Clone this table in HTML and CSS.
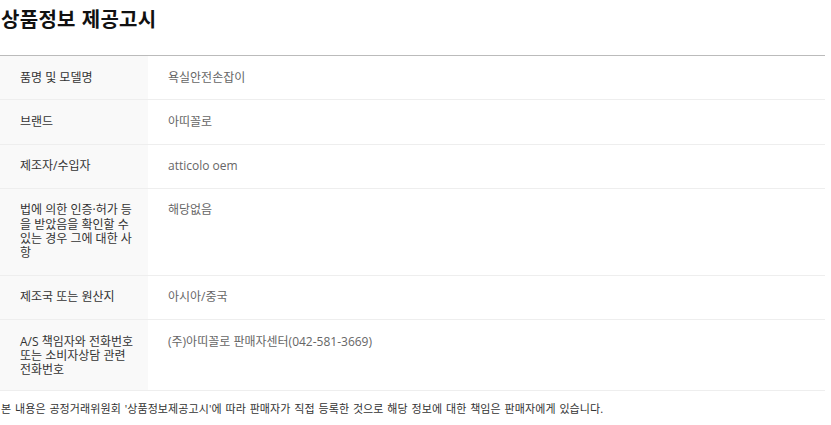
FILE: index.html
```html
<!DOCTYPE html>
<html lang="ko">
<head>
<meta charset="utf-8">
<title>상품정보 제공고시</title>
<link rel="stylesheet" href="styles.css">
</head>
<body>
<section class="notice">
  <h2 class="notice-title">상품정보 제공고시</h2>
  <table class="info">
    <tbody>
      <tr><th>품명 및 모델명</th><td>욕실안전손잡이</td></tr>
      <tr><th>브랜드</th><td>아띠꼴로</td></tr>
      <tr><th>제조자/수입자</th><td>atticolo oem</td></tr>
      <tr><th>법에 의한 인증·허가 등을 받았음을 확인할 수 있는 경우 그에 대한 사항</th><td>해당없음</td></tr>
      <tr><th>제조국 또는 원산지</th><td>아시아/중국</td></tr>
      <tr><th>A/S 책임자와 전화번호 또는 소비자상담 관련 전화번호</th><td>(주)아띠꼴로 판매자센터(042-581-3669)</td></tr>
    </tbody>
  </table>
  <p class="notice-foot">본 내용은 공정거래위원회 '상품정보제공고시'에 따라 판매자가 직접 등록한 것으로 해당 정보에 대한 책임은 판매자에게 있습니다.</p>
</section>
</body>
</html>
```
FILE: styles.css
```css
html, body {
  margin: 0;
  padding: 0;
  background: #fff;
}
body {
  font-family: "Open Sans", "Noto Sans CJK KR", sans-serif;
  font-size: 12px;
  line-height: 14.25px;
  color: #333;
}
.notice {
  width: 825px;
}
.notice-title {
  margin: 0 0 24px;
  padding: 7px 0 0 1px;
  font-family: "Noto Sans CJK KR", sans-serif;
  font-size: 20px;
  line-height: 24px;
  font-weight: 700;
  letter-spacing: 0.3px;
  color: #111;
}
.info {
  width: 100%;
  border-collapse: collapse;
  border-top: 1px solid #bbb;
}
.info tr {
  border-bottom: 1px solid #eee;
}
.info th {
  width: 118px;
  padding: 14.5px 10px 14.5px 20px;
  background: #f9f9f9;
  text-align: left;
  vertical-align: top;
  font-weight: 400;
  color: #333;
}
.info td {
  padding: 14.5px 20px;
  vertical-align: top;
  color: #666;
}
.info tr:last-child th,
.info tr:last-child td {
  padding-bottom: 13px;
}
.notice-foot {
  margin: 11px 0 0;
  padding-left: 1px;
  font-size: 11px;
  letter-spacing: 0.1px;
  word-spacing: 0.8px;
  color: #333;
}
```
